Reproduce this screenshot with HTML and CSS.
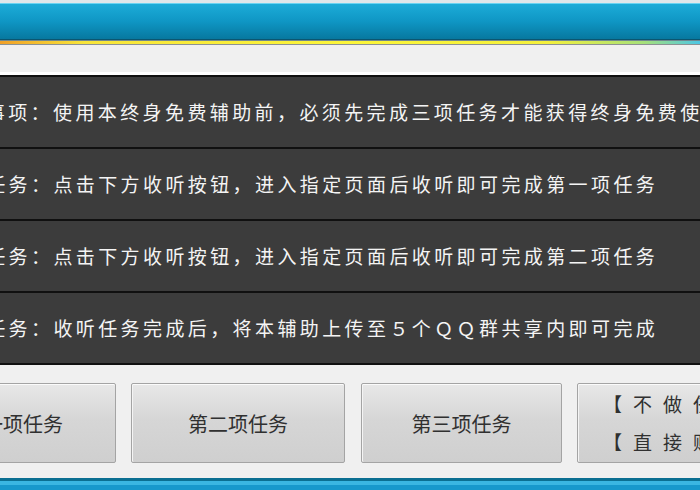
FILE: index.html
```html
<!DOCTYPE html>
<html>

<head>
  <meta charset="UTF-8">
  <title>终身免费辅助</title>
  <link rel="stylesheet" href="styles.css">
</head>

<body>
  <div class="window">
    <div class="edge"></div>
    <div class="title"></div>
    <div class="stripe"></div>
    <div class="toolbar"></div>

    <div class="list">
      <div class="row row-note">注意事项：使用本终身免费辅助前，必须先完成三项任务才能获得终身免费使用权限</div>
      <div class="row">第一项任务：点击下方收听按钮，进入指定页面后收听即可完成第一项任务</div>
      <div class="row">第二项任务：点击下方收听按钮，进入指定页面后收听即可完成第二项任务</div>
      <div class="row">第三项任务：收听任务完成后，将本辅助上传至５个ＱＱ群共享内即可完成</div>
    </div>

    <div class="actions">
      <button class="btn btn-first">第一项任务</button>
      <button class="btn btn-second">第二项任务</button>
      <button class="btn btn-third">第三项任务</button>
      <button class="btn btn-skip">
        <span>【不做任务】</span>
        <span>【直接购买】</span>
      </button>
    </div>

    <div class="footer-bar"></div>
  </div>
</body>

</html>
```

FILE: styles.css
```css
body {
  background: #f0f0f0;
  font-family: "Noto Sans CJK SC", "Liberation Sans", sans-serif;
  margin: 0;
  overflow: hidden;
  padding: 0;
}

.window {
  height: 490px;
  overflow: hidden;
  width: 700px;
}

.edge {
  background: #dfe7ea;
  height: 3px;
}

.title {
  background: linear-gradient(#1cacd8, #0f96c4 50%, #07789f);
  border-bottom: 1px solid #0b5670;
  border-top: 1px solid #6ad4f2;
  height: 35px;
}

.stripe {
  background: linear-gradient(90deg, #f0a028, #f7e43a 12%, #fbf53a 50%, #f4f03c 78%, #a6e07a 92%, #4cc6e4);
  border-bottom: 1px solid #8c9294;
  border-top: 1px solid #6f8790;
  height: 3px;
}

.toolbar {
  background: #f0f0f0;
  border-bottom: 3px solid #ffffff;
  height: 27px;
}

.list {
  background: #3c3c3c;
  border-top: 2px solid #101010;
}

.row {
  border-bottom: 2px solid #101010;
  color: #f4f4f4;
  font-size: 19px;
  height: 70px;
  letter-spacing: 3.4px;
  line-height: 70px;
  overflow: hidden;
  text-indent: -81px;
  white-space: nowrap;
}

.row-note {
  text-indent: -59px;
}

.actions {
  display: flex;
  gap: 15px;
  height: 80px;
  margin: 18px 0 15px -90px;
}

.btn {
  background: linear-gradient(#e8e8e8, #d6d6d6 45%, #cfcfcf);
  border: 1px solid #a4a4a4;
  border-radius: 2px;
  box-shadow: inset 0 1px 0 #fbfbfb, inset 1px 0 0 #f4f4f4;
  color: #303030;
  flex: none;
  font-family: inherit;
  font-size: 20px;
  height: 80px;
  padding: 0;
}

.btn-first {
  width: 206px;
}

.btn-second {
  width: 214px;
}

.btn-third {
  margin-left: 1px;
  width: 201px;
}

.btn-skip {
  display: flex;
  flex-direction: column;
  font-size: 19px;
  justify-content: center;
  letter-spacing: 11px;
  line-height: 38px;
  padding-left: 25px;
  text-align: left;
  white-space: nowrap;
  width: 240px;
}

.footer-bar {
  background: linear-gradient(#0b6f92 0, #0b6f92 3px, #3ab6e2 3px, #3ab6e2 7px, #1798cc 7px);
  height: 12px;
}
```
